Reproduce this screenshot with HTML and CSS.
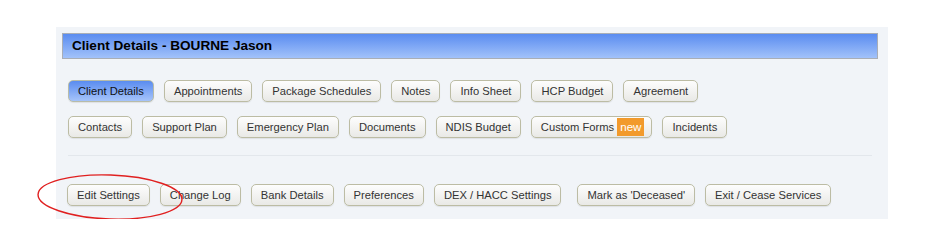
FILE: index.html
```html
<!DOCTYPE html>
<html lang="en">
<head>
    <meta charset="UTF-8">
    <title>Client Details</title>
    <link rel="stylesheet" href="styles.css">
</head>
<body>
    <div class="panel">
        <div class="panel-title">Client Details - BOURNE Jason</div>
        <div class="tab-row first">
            <button class="btn active">Client Details</button>
            <button class="btn">Appointments</button>
            <button class="btn">Package Schedules</button>
            <button class="btn">Notes</button>
            <button class="btn">Info Sheet</button>
            <button class="btn">HCP Budget</button>
            <button class="btn">Agreement</button>
        </div>
        <div class="tab-row">
            <button class="btn">Contacts</button>
            <button class="btn">Support Plan</button>
            <button class="btn">Emergency Plan</button>
            <button class="btn">Documents</button>
            <button class="btn">NDIS Budget</button>
            <button class="btn">Custom Forms <span class="badge">new</span></button>
            <button class="btn">Incidents</button>
        </div>
        <div class="divider"></div>
        <div class="tab-row actions">
            <button class="btn">Edit Settings</button>
            <button class="btn">Change Log</button>
            <button class="btn">Bank Details</button>
            <button class="btn">Preferences</button>
            <button class="btn">DEX / HACC Settings</button>
            <button class="btn spaced">Mark as 'Deceased'</button>
            <button class="btn">Exit / Cease Services</button>
        </div>
    </div>

    <svg class="mark" width="160" height="56" viewBox="0 0 160 56">
        <ellipse cx="74" cy="27" rx="72" ry="22" fill="none" stroke="#e02020" stroke-width="1.4" transform="rotate(2 74 27)"/>
    </svg>
</body>
</html>
```

FILE: styles.css
```css
body {
    margin: 0;
    padding: 0;
    background: #fff;
    font-family: 'Liberation Sans', Arial, sans-serif;
    position: relative;
}
.panel {
    margin: 27px 0 0 56px;
    width: 832px;
    height: 192px;
    box-sizing: border-box;
    padding: 6px 10px 0 6px;
    background-color: #f1f4f8;
}
.panel-title {
    height: 26px;
    box-sizing: border-box;
    border: 1px solid #a9aeb6;
    background: linear-gradient(#5a8cf0, #a2c2fa);
    color: #000;
    font-size: 13.6px;
    font-weight: bold;
    line-height: 24px;
    padding-left: 9px;
}
.tab-row {
    display: flex;
    gap: 10px;
    margin: 14px 0 0 6px;
}
.tab-row.first {
    margin-top: 21px;
}
.tab-row.actions {
    margin-top: 28px;
    margin-left: 5px;
    gap: 10px;
}
.btn {
    font-family: 'Liberation Sans', Arial, sans-serif;
    font-size: 11.2px;
    color: #333;
    height: 22px;
    line-height: 20px;
    padding: 0 9px;
    border: 1px solid #bcbca4;
    border-radius: 5px;
    background: linear-gradient(#fdfdfd, #e9e9e6);
    box-shadow: 0 1px 1px rgba(0, 0, 0, 0.08);
    display: flex;
    align-items: center;
    white-space: nowrap;
}
.btn.active {
    background: linear-gradient(#5a8cf0, #a6c4fa);
    border-color: #b8bca8;
    color: #111;
}
.btn.spaced {
    margin-left: 6px;
}
.badge {
    background-color: #f29a2c;
    color: #fff;
    height: 18px;
    line-height: 18px;
    padding: 0 3px;
    margin-left: 3px;
    margin-right: -2px;
    font-size: 11.6px;
}
.divider {
    height: 1px;
    background-color: #e3e7ec;
    margin: 17px 6px 0 6px;
}
.mark {
    position: absolute;
    left: 36px;
    top: 170px;
}
```
